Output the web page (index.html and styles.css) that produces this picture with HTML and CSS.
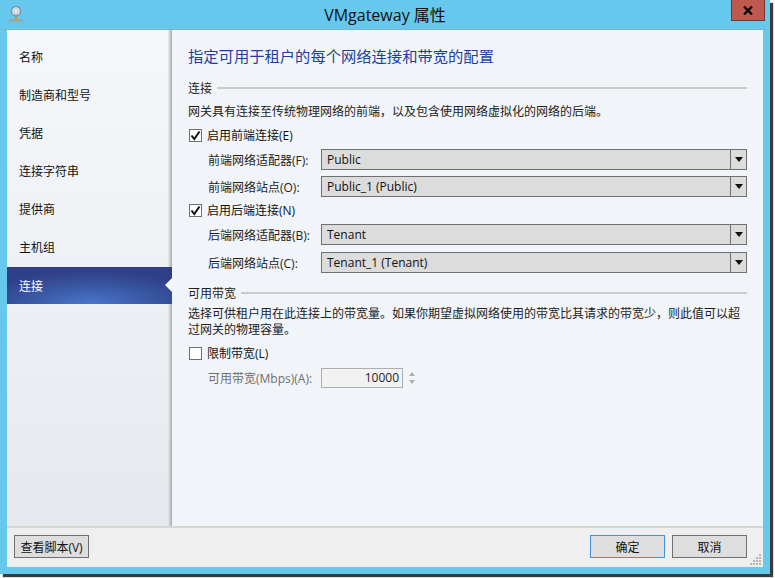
FILE: index.html
```html
<!DOCTYPE html>
<html lang="zh-CN">
<head>
<meta charset="utf-8">
<title>VMgateway 属性</title>
<link rel="stylesheet" href="styles.css">
</head>
<body>
<div class="window">
  <header class="titlebar">
    <svg class="app-icon" width="18" height="18" viewBox="0 0 18 18">
      <circle cx="8" cy="6" r="4.6" fill="#cfe6f2" stroke="#87949b" stroke-width="1.5"/>
      <circle cx="8" cy="6" r="2.2" fill="#e9f3f8" stroke="#9cc0d4" stroke-width="0.8"/>
      <rect x="7.2" y="11" width="1.6" height="3" fill="#8a8f92"/>
      <rect x="0.5" y="14.5" width="15" height="2" fill="#9aa3a6"/>
      <rect x="6.5" y="12.5" width="3" height="3" fill="#e09a20"/>
    </svg>
    <h1 class="title">VMgateway 属性</h1>
    <button class="close" type="button" aria-label="关闭">
      <svg width="10" height="9" viewBox="0 0 10 9"><path d="M1 0.5L9 8.5M9 0.5L1 8.5" stroke="#000" stroke-width="2.2" fill="none"/></svg>
    </button>
  </header>
  <div class="client">
    <div class="body">
      <nav class="sidebar">
        <a class="nav-item">名称</a>
        <a class="nav-item">制造商和型号</a>
        <a class="nav-item">凭据</a>
        <a class="nav-item">连接字符串</a>
        <a class="nav-item">提供商</a>
        <a class="nav-item">主机组</a>
        <a class="nav-item active">连接<span class="notch"></span></a>
      </nav>
      <main class="main">
        <h2 class="heading">指定可用于租户的每个网络连接和带宽的配置</h2>

        <div class="section-title first"><span>连接</span><i class="rule"></i></div>
        <p class="para one">网关具有连接至传统物理网络的前端，以及包含使用网络虚拟化的网络的后端。</p>

        <div class="check-row"><span class="check on"><svg width="11" height="11" viewBox="0 0 11 11"><path d="M1.5 5.5L4.3 9L9.5 1.5" stroke="#111" stroke-width="2" fill="none"/></svg></span><span>启用前端连接(E)</span></div>
        <div class="field-row"><label class="field-label">前端网络适配器(F):</label><div class="combo"><span class="combo-value">Public</span><span class="combo-arrow"><i></i></span></div></div>
        <div class="field-row"><label class="field-label">前端网络站点(O):</label><div class="combo"><span class="combo-value">Public_1 (Public)</span><span class="combo-arrow"><i></i></span></div></div>

        <div class="check-row next"><span class="check on"><svg width="11" height="11" viewBox="0 0 11 11"><path d="M1.5 5.5L4.3 9L9.5 1.5" stroke="#111" stroke-width="2" fill="none"/></svg></span><span>启用后端连接(N)</span></div>
        <div class="field-row"><label class="field-label">后端网络适配器(B):</label><div class="combo"><span class="combo-value">Tenant</span><span class="combo-arrow"><i></i></span></div></div>
        <div class="field-row wide-gap"><label class="field-label">后端网络站点(C):</label><div class="combo"><span class="combo-value">Tenant_1 (Tenant)</span><span class="combo-arrow"><i></i></span></div></div>

        <div class="section-title bandwidth"><span>可用带宽</span><i class="rule"></i></div>
        <p class="para two">选择可供租户用在此连接上的带宽量。如果你期望虚拟网络使用的带宽比其请求的带宽少，则此值可以超过网关的物理容量。</p>

        <div class="check-row limit"><span class="check"></span><span>限制带宽(L)</span></div>
        <div class="field-row">
          <label class="field-label muted">可用带宽(Mbps)(A):</label>
          <div class="spin-input">10000</div>
          <div class="spinner"><i class="up"></i><i class="down"></i></div>
        </div>
      </main>
    </div>
    <footer class="footer">
      <button class="btn script" type="button">查看脚本(V)</button>
      <div class="footer-right">
        <button class="btn primary" type="button">确定</button>
        <button class="btn" type="button">取消</button>
      </div>
      <svg class="grip" width="12" height="12" viewBox="0 0 12 12" fill="#b4b4b4">
        <rect x="9" y="0" width="2" height="2"/><rect x="9" y="3" width="2" height="2"/><rect x="6" y="3" width="2" height="2"/>
        <rect x="9" y="6" width="2" height="2"/><rect x="6" y="6" width="2" height="2"/><rect x="3" y="6" width="2" height="2"/>
        <rect x="9" y="9" width="2" height="2"/><rect x="6" y="9" width="2" height="2"/><rect x="3" y="9" width="2" height="2"/><rect x="0" y="9" width="2" height="2"/>
      </svg>
    </footer>
  </div>
</div>
</body>
</html>
```
FILE: styles.css
```css
* { box-sizing: border-box; }
html, body { margin: 0; padding: 0; background: #fff; }
body {
  width: 775px;
  height: 578px;
  overflow: hidden;
  font-family: "Open Sans", "Noto Sans CJK SC", sans-serif;
  font-size: 12px;
  color: #111;
}
.window {
  width: 770px;
  height: 574px;
  background: #65c8ec;
  box-shadow: 3px 3px 1px #3c3c3c;
  display: flex;
  flex-direction: column;
}
.titlebar {
  height: 30px;
  flex: none;
  position: relative;
  display: flex;
  justify-content: center;
  border-bottom: 1px solid #7fb3c8;
}
.app-icon { position: absolute; left: 8px; top: 5px; }
.title {
  margin: 6px 0 0;
  font-size: 16px;
  line-height: 18px;
  font-weight: 400;
  color: #111;
}
.close {
  position: absolute;
  right: 5px;
  top: 0;
  width: 34px;
  height: 21px;
  padding: 0;
  background: #c0594d;
  border: 1px solid #6e3a38;
  border-top: 0;
  display: flex;
  align-items: center;
  justify-content: center;
}
.client {
  margin: 0 7px 7px;
  flex: 1;
  min-height: 0;
  display: flex;
  flex-direction: column;
}
.body { flex: 1; min-height: 0; display: flex; }
.sidebar {
  width: 165px;
  flex: none;
  padding-top: 8px;
  background:
    linear-gradient(to right, rgba(190, 193, 196, 0) 161px, #d8dadc 162px, #a9acaf 165px),
    linear-gradient(#f6f7fb, #e5e9ee);
}
.nav-item {
  height: 38px;
  display: flex;
  align-items: center;
  padding-left: 12px;
  position: relative;
}
.nav-item.active {
  height: 37px;
  margin-top: 1px;
  color: #fff;
  background: radial-gradient(ellipse 70% 90% at 50% 100%, #4a76cc 0%, #3a5aa6 50%, #2f3f87 100%);
}
.notch {
  position: absolute;
  right: 0;
  top: 11px;
  width: 0;
  height: 0;
  border-style: solid;
  border-width: 7.5px 7px 7.5px 0;
  border-color: transparent #f4f6f9 transparent transparent;
}
.main {
  flex: 1;
  min-width: 0;
  padding: 0 16px;
  background: #f1f5f9;
}
.heading {
  margin: 16px 0 0;
  font-size: 15.3px;
  line-height: 20px;
  font-weight: 400;
  color: #1c3fa0;
}
.section-title { display: flex; align-items: center; height: 16px; color: #222; }
.section-title.first { margin-top: 14px; }
.section-title.bandwidth { margin-top: 12px; }
.rule { flex: 1; height: 2px; margin-left: 5px; background: #cbcbcb; }
.para { margin: 0; line-height: 16px; color: #222; }
.para.one { margin-top: 8px; }
.para.two { margin-top: 5px; }
.check-row { display: flex; align-items: center; height: 16px; margin-top: 7px; gap: 5px; padding-left: 1px; }
.check-row.next { margin-top: 5px; }
.check {
  width: 13px;
  height: 13px;
  border: 1px solid #6f6f6f;
  background: #fff;
  display: flex;
  align-items: center;
  justify-content: center;
}
.field-row { display: flex; align-items: center; height: 21px; margin-top: 6px; padding-left: 20px; }
.field-row.wide-gap { margin-top: 7px; }
.field-label { width: 113px; flex: none; color: #222; }
.field-label.muted { color: #6e6e6e; }
.combo {
  flex: 1;
  height: 21px;
  display: flex;
  background: #dcdcdc;
  border: 1px solid #707070;
}
.combo-value { flex: 1; padding-left: 5px; line-height: 19px; color: #111; }
.combo-arrow {
  width: 16px;
  border-left: 1px solid #707070;
  display: flex;
  align-items: center;
  justify-content: center;
}
.combo-arrow i {
  width: 0;
  height: 0;
  border-style: solid;
  border-width: 5px 4px 0;
  border-color: #111 transparent transparent;
}
.spin-input {
  width: 82px;
  height: 20px;
  border: 1px solid #aeaeae;
  background: #f2f2f2;
  text-align: right;
  padding-right: 3px;
  line-height: 18px;
  color: #222;
}
.spinner { display: flex; flex-direction: column; gap: 4px; margin-left: 6px; }
.spinner i { width: 0; height: 0; border-style: solid; }
.spinner .up { border-width: 0 3.5px 4px; border-color: transparent transparent #b0b0b0; }
.spinner .down { border-width: 4px 3.5px 0; border-color: #b0b0b0 transparent transparent; }
.footer {
  height: 41px;
  flex: none;
  background: #efefef;
  border-top: 2px solid #d6d6d6;
  display: flex;
  align-items: flex-start;
  justify-content: space-between;
  padding: 7px 16px 0 7px;
  position: relative;
}
.footer-right { display: flex; gap: 7px; }
.btn {
  width: 75px;
  height: 23px;
  padding: 0;
  font: inherit;
  color: #111;
  background: #dedede;
  border: 1px solid #707070;
}
.btn.primary { border-color: #3f93e0; }
.grip { position: absolute; right: 1px; bottom: 1px; }
```
